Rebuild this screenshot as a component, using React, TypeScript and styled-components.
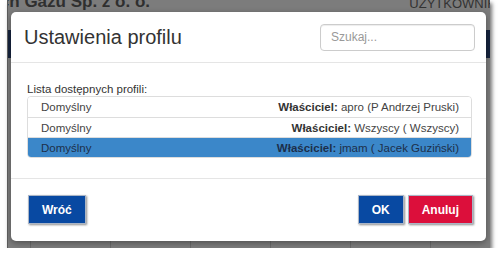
import styled, { createGlobalStyle } from "styled-components";

type Profile = {
  name: string;
  login: string;
  owner: string;
  selected?: boolean;
}

const profiles: Profile[] = [
  { name: "Domyślny", login: "apro", owner: "(P Andrzej Pruski)" },
  { name: "Domyślny", login: "Wszyscy", owner: "( Wszyscy)" },
  { name: "Domyślny", login: "jmam", owner: "( Jacek Guziński)", selected: true },
]

const GlobalStyle = createGlobalStyle`
  html, body {
    margin: 0;
    padding: 0;
    background: #ffffff;
    font-family: "Liberation Sans", Arial, sans-serif;
  }
  * {
    box-sizing: border-box;
  }
`

const Frame = styled.div`
  position: relative;
  margin-left: 7px;
  width: 483px;
  height: 248px;
  overflow: hidden;
  background: #7c7c7c;
  border-left: 1px solid #5a5a5a;
  box-shadow: 2px 3px 4px rgba(0, 0, 0, 0.55);
`

const Page = styled.div`
  display: flex;
  flex-direction: column;
  height: 100%;
`

const TopBar = styled.div`
  display: flex;
  justify-content: space-between;
  align-items: flex-start;
  height: 30px;
`

const Company = styled.div`
  display: flex;
  justify-content: flex-end;
  width: 142px;
  overflow: hidden;
  white-space: nowrap;
  margin-top: -8px;
  font-size: 17px;
  font-weight: 700;
  color: #2f2f2f;
`

const UserLabel = styled.div`
  margin-top: -4px;
  margin-right: -6px;
  font-size: 13px;
  color: #333333;
  white-space: nowrap;
`

const NavBar = styled.div`
  height: 28px;
  background: #16233e;
`

const PageContent = styled.div`
  flex: 1;
  display: flex;
  flex-direction: column;
  justify-content: flex-end;
`

const TableRow = styled.div`
  display: grid;
  grid-template-columns: repeat(6, 80px);
  padding-left: 22px;
  height: 40px;
`

const TableCell = styled.div`
  border-left: 1px solid #6a6a6a;
`

const Overlay = styled.div`
  position: absolute;
  inset: 0;
  display: flex;
  padding: 12px 4px 7px 3px;
`

const Modal = styled.div`
  flex: 1;
  display: flex;
  flex-direction: column;
  background: #ffffff;
  border-radius: 5px;
  box-shadow: 0 2px 6px rgba(0, 0, 0, 0.35);
  color: #333333;
`

const Header = styled.div`
  display: flex;
  justify-content: space-between;
  align-items: center;
  height: 52px;
  padding: 0 11px 0 13px;
  border-bottom: 1px solid #e5e5e5;
`

const Title = styled.h4`
  margin: 0;
  font-size: 20px;
  font-weight: 400;
  color: #333333;
`

const SearchInput = styled.input`
  width: 155px;
  height: 27px;
  padding: 0 10px;
  border: 1px solid #cccccc;
  border-radius: 4px;
  box-shadow: inset 0 1px 1px rgba(0, 0, 0, 0.075);
  font-family: inherit;
  font-size: 12px;
  color: #555555;
  outline: none;

  &::placeholder {
    color: #999999;
  }
`

const Body = styled.div`
  padding: 19px 14px 20px 16px;
`

const ListLabel = styled.div`
  height: 14px;
  line-height: 14px;
  font-size: 11.5px;
  color: #333333;
`

const List = styled.div`
  border: 1px solid #dddddd;
  border-radius: 4px;
  overflow: hidden;
`

const Row = styled.div<{ $selected?: boolean }>`
  display: flex;
  justify-content: space-between;
  align-items: center;
  height: 20px;
  padding: 0 12px 0 13px;
  font-size: 11.5px;
  color: ${p => p.$selected ? "#1d2f4a" : "#444444"};
  background: ${p => p.$selected ? "#3b87c9" : "#ffffff"};

  & + & {
    border-top: 1px solid #dddddd;
  }

  b {
    color: ${p => p.$selected ? "#1d2f4a" : "#333333"};
  }
`

const Footer = styled.div`
  display: flex;
  justify-content: space-between;
  align-items: center;
  padding: 16px 13px 17px 17px;
  border-top: 1px solid #e5e5e5;
`

const ButtonGroup = styled.div`
  display: flex;
  gap: 4px;
`

const Button = styled.button<{ $variant?: "primary" | "danger" }>`
  height: 29px;
  padding: 0 13px;
  border: 1px solid #aab5c6;
  border-radius: 0;
  background: ${p => p.$variant === "danger" ? "#dc0f3b" : "#0849a2"};
  box-shadow: 1px 1px 2px rgba(0, 0, 0, 0.45);
  font-family: inherit;
  font-size: 12px;
  font-weight: 700;
  color: #ffffff;
  cursor: pointer;
`

function App() {
  return (
    <>
      <GlobalStyle />
      <Frame>
        <Page>
          <TopBar>
            <Company>Technicznych Gazu Sp. z o. o.</Company>
            <UserLabel>UŻYTKOWNIK</UserLabel>
          </TopBar>
          <NavBar />
          <PageContent>
            <TableRow>
              {Array.from({ length: 6 }).map((_, i) => <TableCell key={i} />)}
            </TableRow>
          </PageContent>
        </Page>
        <Overlay>
          <Modal>
            <Header>
              <Title>Ustawienia profilu</Title>
              <SearchInput placeholder="Szukaj..." />
            </Header>
            <Body>
              <ListLabel>Lista dostępnych profili:</ListLabel>
              <List>
                {profiles.map((p, i) => (
                  <Row key={i} $selected={p.selected}>
                    <span>{p.name}</span>
                    <span><b>Właściciel:</b> {p.login} {p.owner}</span>
                  </Row>
                ))}
              </List>
            </Body>
            <Footer>
              <Button>Wróć</Button>
              <ButtonGroup>
                <Button>OK</Button>
                <Button $variant="danger">Anuluj</Button>
              </ButtonGroup>
            </Footer>
          </Modal>
        </Overlay>
      </Frame>
    </>
  )
}

export default App
